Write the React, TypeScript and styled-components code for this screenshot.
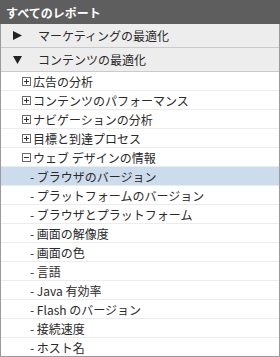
import React from "react";
import styled, { createGlobalStyle } from "styled-components";

const Global = createGlobalStyle`
  html, body { margin: 0; padding: 0; background: #ffffff; }
  body { font-family: "Noto Sans CJK JP", "Noto Sans", sans-serif; }
`;

const Panel = styled.div`
  width: 280px;
  box-sizing: border-box;
  border-left: 1px solid #9a9a9a;
  border-right: 1px solid #9a9a9a;
  border-bottom: 1px solid #9a9a9a;
  background: #ffffff;
  display: flex;
  flex-direction: column;
`;

const Header = styled.div`
  height: 24px;
  background: #5e5e5e;
  color: #ffffff;
  font-weight: bold;
  font-size: 12px;
  display: flex;
  align-items: center;
  padding-left: 6px;
  margin: 0 -1px;
`;

const Section = styled.div`
  height: 23px;
  border-bottom: 1px solid #cbcbcb;
  background: #ededed;
  display: flex;
  align-items: center;
  font-size: 12px;
  color: #2a2a2a;
`;

const Arrow = styled.span`
  width: 37px;
  padding-left: 12px;
  box-sizing: border-box;
  display: flex;
  align-items: center;
`;

const Row = styled.div<{ $selected?: boolean; $last?: boolean }>`
  height: 18px;
  border-bottom: ${(p) => (p.$last ? "none" : "1px solid #ececec")};
  background: ${(p) => (p.$selected ? "#cddcec" : "#ffffff")};
  display: flex;
  align-items: center;
  font-size: 12px;
  color: #2a2a2a;
  white-space: nowrap;
`;

const NodeIcon = styled.span`
  margin-left: 21px;
  width: 11px;
  display: flex;
  align-items: center;
`;

const Leaf = styled.span`
  padding-left: 29px;
`;

const Box = ({ open }: { open?: boolean }) => (
  <svg width="9" height="9" viewBox="0 0 9 9">
    <rect x="0.5" y="0.5" width="8" height="8" fill="#fff" stroke="#6a6a6a" />
    <line x1="2" y1="4.5" x2="7" y2="4.5" stroke="#333" />
    {!open && <line x1="4.5" y1="2" x2="4.5" y2="7" stroke="#333" />}
  </svg>
);

const Tri = ({ down }: { down?: boolean }) => (
  <svg width="9" height="9" viewBox="0 0 9 9">
    {down ? <polygon points="0,1 9,1 4.5,9" fill="#222" /> : <polygon points="0,0 9,4.5 0,9" fill="#222" />}
  </svg>
);

const nodes = ["広告の分析", "コンテンツのパフォーマンス", "ナビゲーションの分析", "目標と到達プロセス"];
const leaves = [
  "ブラウザのバージョン",
  "プラットフォームのバージョン",
  "ブラウザとプラットフォーム",
  "画面の解像度",
  "画面の色",
  "言語",
  "Java 有効率",
  "Flash のバージョン",
  "接続速度",
  "ホスト名",
];

export default function App() {
  return (
    <>
      <Global />
      <Panel>
        <Header>すべてのレポート</Header>
        <Section>
          <Arrow><Tri /></Arrow>マーケティングの最適化
        </Section>
        <Section>
          <Arrow><Tri down /></Arrow>コンテンツの最適化
        </Section>
        {nodes.map((n) => (
          <Row key={n}>
            <NodeIcon><Box /></NodeIcon>
            {n}
          </Row>
        ))}
        <Row>
          <NodeIcon><Box open /></NodeIcon>
          ウェブ デザインの情報
        </Row>
        {leaves.map((l, i) => (
          <Row key={l} $selected={i === 0} $last={i === leaves.length - 1}>
            <Leaf>- {l}</Leaf>
          </Row>
        ))}
      </Panel>
    </>
  );
}
